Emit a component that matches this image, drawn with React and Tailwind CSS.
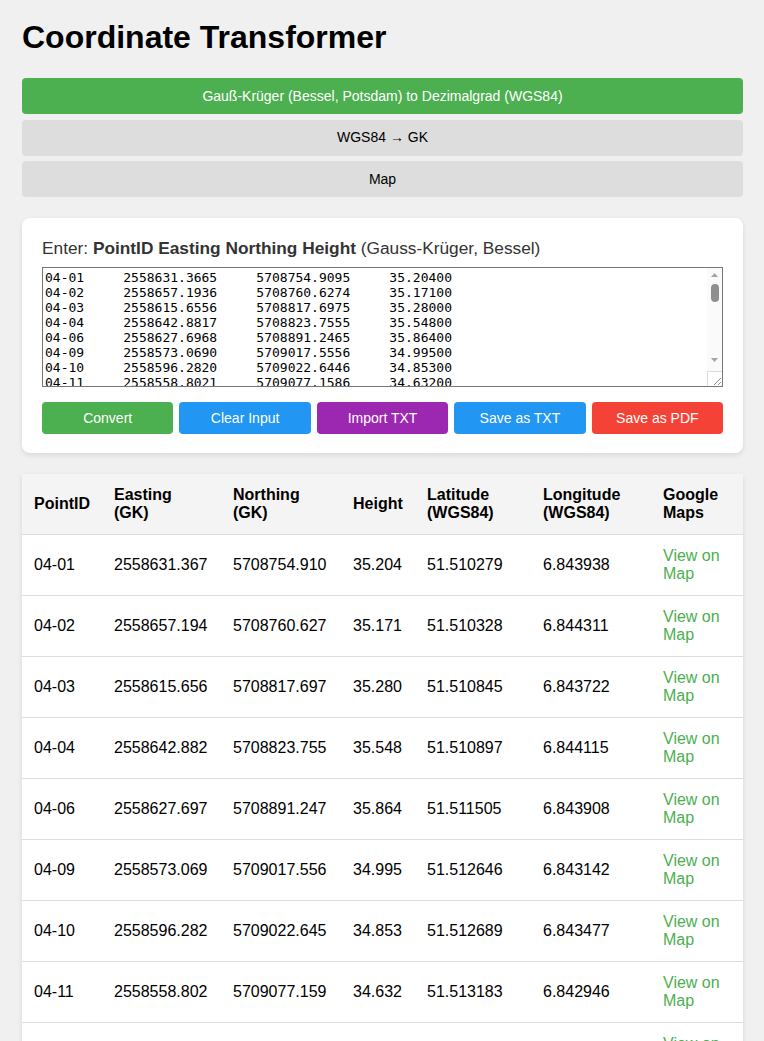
import React from "react";

const rows = [
  ["04-01", "2558631.3665", "5708754.9095", "35.20400", "51.510279", "6.843938"],
  ["04-02", "2558657.1936", "5708760.6274", "35.17100", "51.510328", "6.844311"],
  ["04-03", "2558615.6556", "5708817.6975", "35.28000", "51.510845", "6.843722"],
  ["04-04", "2558642.8817", "5708823.7555", "35.54800", "51.510897", "6.844115"],
  ["04-06", "2558627.6968", "5708891.2465", "35.86400", "51.511505", "6.843908"],
  ["04-09", "2558573.0690", "5709017.5556", "34.99500", "51.512646", "6.843142"],
  ["04-10", "2558596.2820", "5709022.6446", "34.85300", "51.512689", "6.843477"],
  ["04-11", "2558558.8021", "5709077.1586", "34.63200", "51.513183", "6.842946"],
  ["04-12", "2558581.4410", "5709112.3072", "34.51800", "51.513504", "6.843265"],
  ["04-13", "2558603.9275", "5709140.8813", "34.40100", "51.513765", "6.843585"],
  ["04-14", "2558622.1184", "5709171.0427", "34.29700", "51.514038", "6.843843"],
  ["04-15", "2558640.5562", "5709203.6619", "34.18300", "51.514333", "6.844106"],
  ["04-16", "2558661.2039", "5709235.4081", "34.07600", "51.514619", "6.844400"],
  ["04-17", "2558679.7730", "5709268.9904", "33.96200", "51.514922", "6.844665"],
  ["04-18", "2558698.0511", "5709301.2247", "33.85000", "51.515213", "6.844925"],
  ["04-19", "2558717.6643", "5709333.5780", "33.74300", "51.515505", "6.845205"],
  ["04-20", "2558735.2958", "5709366.1125", "33.62900", "51.515799", "6.845456"],
  ["04-21", "2558754.8792", "5709398.7341", "33.51500", "51.516093", "6.845735"],
  ["04-22", "2558773.4016", "5709431.0560", "33.40200", "51.516385", "6.845999"],
  ["04-23", "2558792.1187", "5709463.5213", "33.28900", "51.516678", "6.846266"],
  ["04-24", "2558810.6630", "5709496.2024", "33.17700", "51.516973", "6.846530"],
  ["04-25", "2558829.3451", "5709528.7467", "33.06400", "51.517266", "6.846797"],
  ["04-26", "2558848.0209", "5709561.3182", "32.95100", "51.517560", "6.847063"],
  ["04-27", "2558866.5842", "5709593.9056", "32.83800", "51.517854", "6.847328"],
  ["04-28", "2558885.2275", "5709626.4820", "32.72500", "51.518148", "6.847594"],
  ["04-29", "2558903.8701", "5709659.0413", "32.61200", "51.518442", "6.847860"],
  ["04-30", "2558922.5136", "5709691.6075", "32.49900", "51.518736", "6.848126"],
  ["04-31", "2558941.1568", "5709724.1712", "32.38600", "51.519030", "6.848392"],
  ["04-32", "2558959.7997", "5709756.7360", "32.27300", "51.519324", "6.848658"],
  ["04-33", "2558978.4425", "5709789.3004", "32.16000", "51.519618", "6.848924"],
  ["04-34", "2558997.0851", "5709821.8647", "32.04700", "51.519912", "6.849190"],
  ["04-35", "2559015.7276", "5709854.4289", "31.93400", "51.520206", "6.849456"],
  ["04-36", "2559034.3700", "5709886.9930", "31.82100", "51.520500", "6.849722"],
  ["04-37", "2559053.0123", "5709919.5570", "31.70800", "51.520794", "6.849988"],
  ["04-38", "2559071.6545", "5709952.1209", "31.59500", "51.521088", "6.850254"],
  ["04-39", "2559090.2966", "5709984.6847", "31.48200", "51.521382", "6.850520"],
  ["04-40", "2559108.9386", "5710017.2484", "31.36900", "51.521676", "6.850786"],
];

const textValue = rows
  .map((r) => `${r[0]}     ${r[1]}     ${r[2]}     ${r[3]}`)
  .join("\n");

const fmt3 = (s) => Number(s).toFixed(3);

const buttons = [
  ["Convert", "bg-[#4caf50]"],
  ["Clear Input", "bg-[#2196f3]"],
  ["Import TXT", "bg-[#9c27b0]"],
  ["Save as TXT", "bg-[#2196f3]"],
  ["Save as PDF", "bg-[#f44336]"],
];

function FakeScrollbar() {
  return (
    <div className="pointer-events-none absolute right-[1px] top-[1px] flex h-[118px] w-[15px] flex-col bg-[#fafafa]">
      <div className="flex h-[14px] items-center justify-center">
        <svg width="7" height="4" viewBox="0 0 7 4">
          <path d="M0 4 L3.5 0 L7 4 Z" fill="#a3a3a3" />
        </svg>
      </div>
      <div className="flex h-[72px] justify-center">
        <div className="mt-[2px] h-[18px] w-[8px] rounded-full bg-[#8f8f8f]" />
      </div>
      <div className="flex h-[17px] justify-center">
        <svg className="mt-[4px]" width="7" height="4" viewBox="0 0 7 4">
          <path d="M0 0 L7 0 L3.5 4 Z" fill="#a3a3a3" />
        </svg>
      </div>
      <div className="h-[15px] border-l border-t border-[#dcdcdc] bg-white">
        <svg width="14" height="14" viewBox="0 0 14 14">
          <path d="M13 6 L6 13 M13 10 L10 13" stroke="#8a8a8a" strokeWidth="1" />
        </svg>
      </div>
    </div>
  );
}

export default function App() {
  return (
    <div className="min-h-[1041px] bg-[#f0f0f0] px-[22px] pb-10 font-['Liberation_Sans',Arial,sans-serif] text-black">
      <h1 className="pt-[19px] text-[32px] font-bold leading-[37px]">Coordinate Transformer</h1>

      <div className="mt-[22px] flex w-[721px] flex-col gap-[5.5px]">
        <button className="h-[36px] rounded-[4px] bg-[#4caf50] text-[14px] text-white">
          Gauß-Krüger (Bessel, Potsdam) to Dezimalgrad (WGS84)
        </button>
        <button className="h-[36px] rounded-[4px] bg-[#dddddd] text-[14px] text-black">
          WGS84 → GK
        </button>
        <button className="h-[36px] rounded-[4px] bg-[#dddddd] text-[14px] text-black">
          Map
        </button>
      </div>

      <div className="mt-[21px] w-[721px] rounded-[8px] bg-white px-[20px] pb-[19px] pt-[20px] shadow-[0_2px_5px_rgba(0,0,0,0.1)]">
        <label className="block text-[17.3px] leading-[20px] text-[#333]">
          Enter: <b>PointID Easting Northing Height</b> (Gauss-Krüger, Bessel)
        </label>
        <div className="relative mt-[9px] h-[120px] w-[681px]">
          <textarea
            className="block h-[120px] w-[681px] overflow-y-scroll border border-[#767676] px-[2px] py-[2px] font-['DejaVu_Sans_Mono',monospace] text-[13px] leading-[15px] text-black"
            defaultValue={textValue}
            spellCheck={false}
          />
          <FakeScrollbar />
        </div>
        <div className="mt-[15px] flex gap-[6px]">
          {buttons.map(([label, bg]) => (
            <button
              key={label}
              className={`h-[32px] flex-1 rounded-[4px] text-[14px] text-white ${bg}`}
            >
              {label}
            </button>
          ))}
        </div>
      </div>

      <div className="mt-[21px] w-[721px] bg-white shadow-[0_2px_5px_rgba(0,0,0,0.1)]">
        <table className="w-full table-fixed border-collapse text-[16px] leading-[18px]">
          <colgroup>
            <col className="w-[80px]" />
            <col className="w-[119px]" />
            <col className="w-[120px]" />
            <col className="w-[74px]" />
            <col className="w-[116px]" />
            <col className="w-[120px]" />
            <col className="w-[92px]" />
          </colgroup>
          <thead>
            <tr className="h-[60px] border-b border-[#dddddd] bg-[#f4f4f4]">
              {["PointID", "Easting (GK)", "Northing (GK)", "Height", "Latitude (WGS84)", "Longitude (WGS84)", "Google Maps"].map((h) => (
                <th key={h} className="px-[12px] py-[11px] text-left font-bold">
                  {h}
                </th>
              ))}
            </tr>
          </thead>
          <tbody>
            {rows.slice(0, 12).map((r) => (
              <tr key={r[0]} className="h-[61px] border-b border-[#dddddd]">
                <td className="px-[12px] py-[12px]">{r[0]}</td>
                <td className="px-[12px] py-[12px]">{fmt3(r[1])}</td>
                <td className="px-[12px] py-[12px]">{fmt3(r[2])}</td>
                <td className="px-[12px] py-[12px]">{fmt3(r[3])}</td>
                <td className="px-[12px] py-[12px]">{r[4]}</td>
                <td className="px-[12px] py-[12px]">{r[5]}</td>
                <td className="px-[12px] py-[12px]">
                  <a href="#" className="text-[#4caf50]">View on Map</a>
                </td>
              </tr>
            ))}
          </tbody>
        </table>
      </div>
    </div>
  );
}
